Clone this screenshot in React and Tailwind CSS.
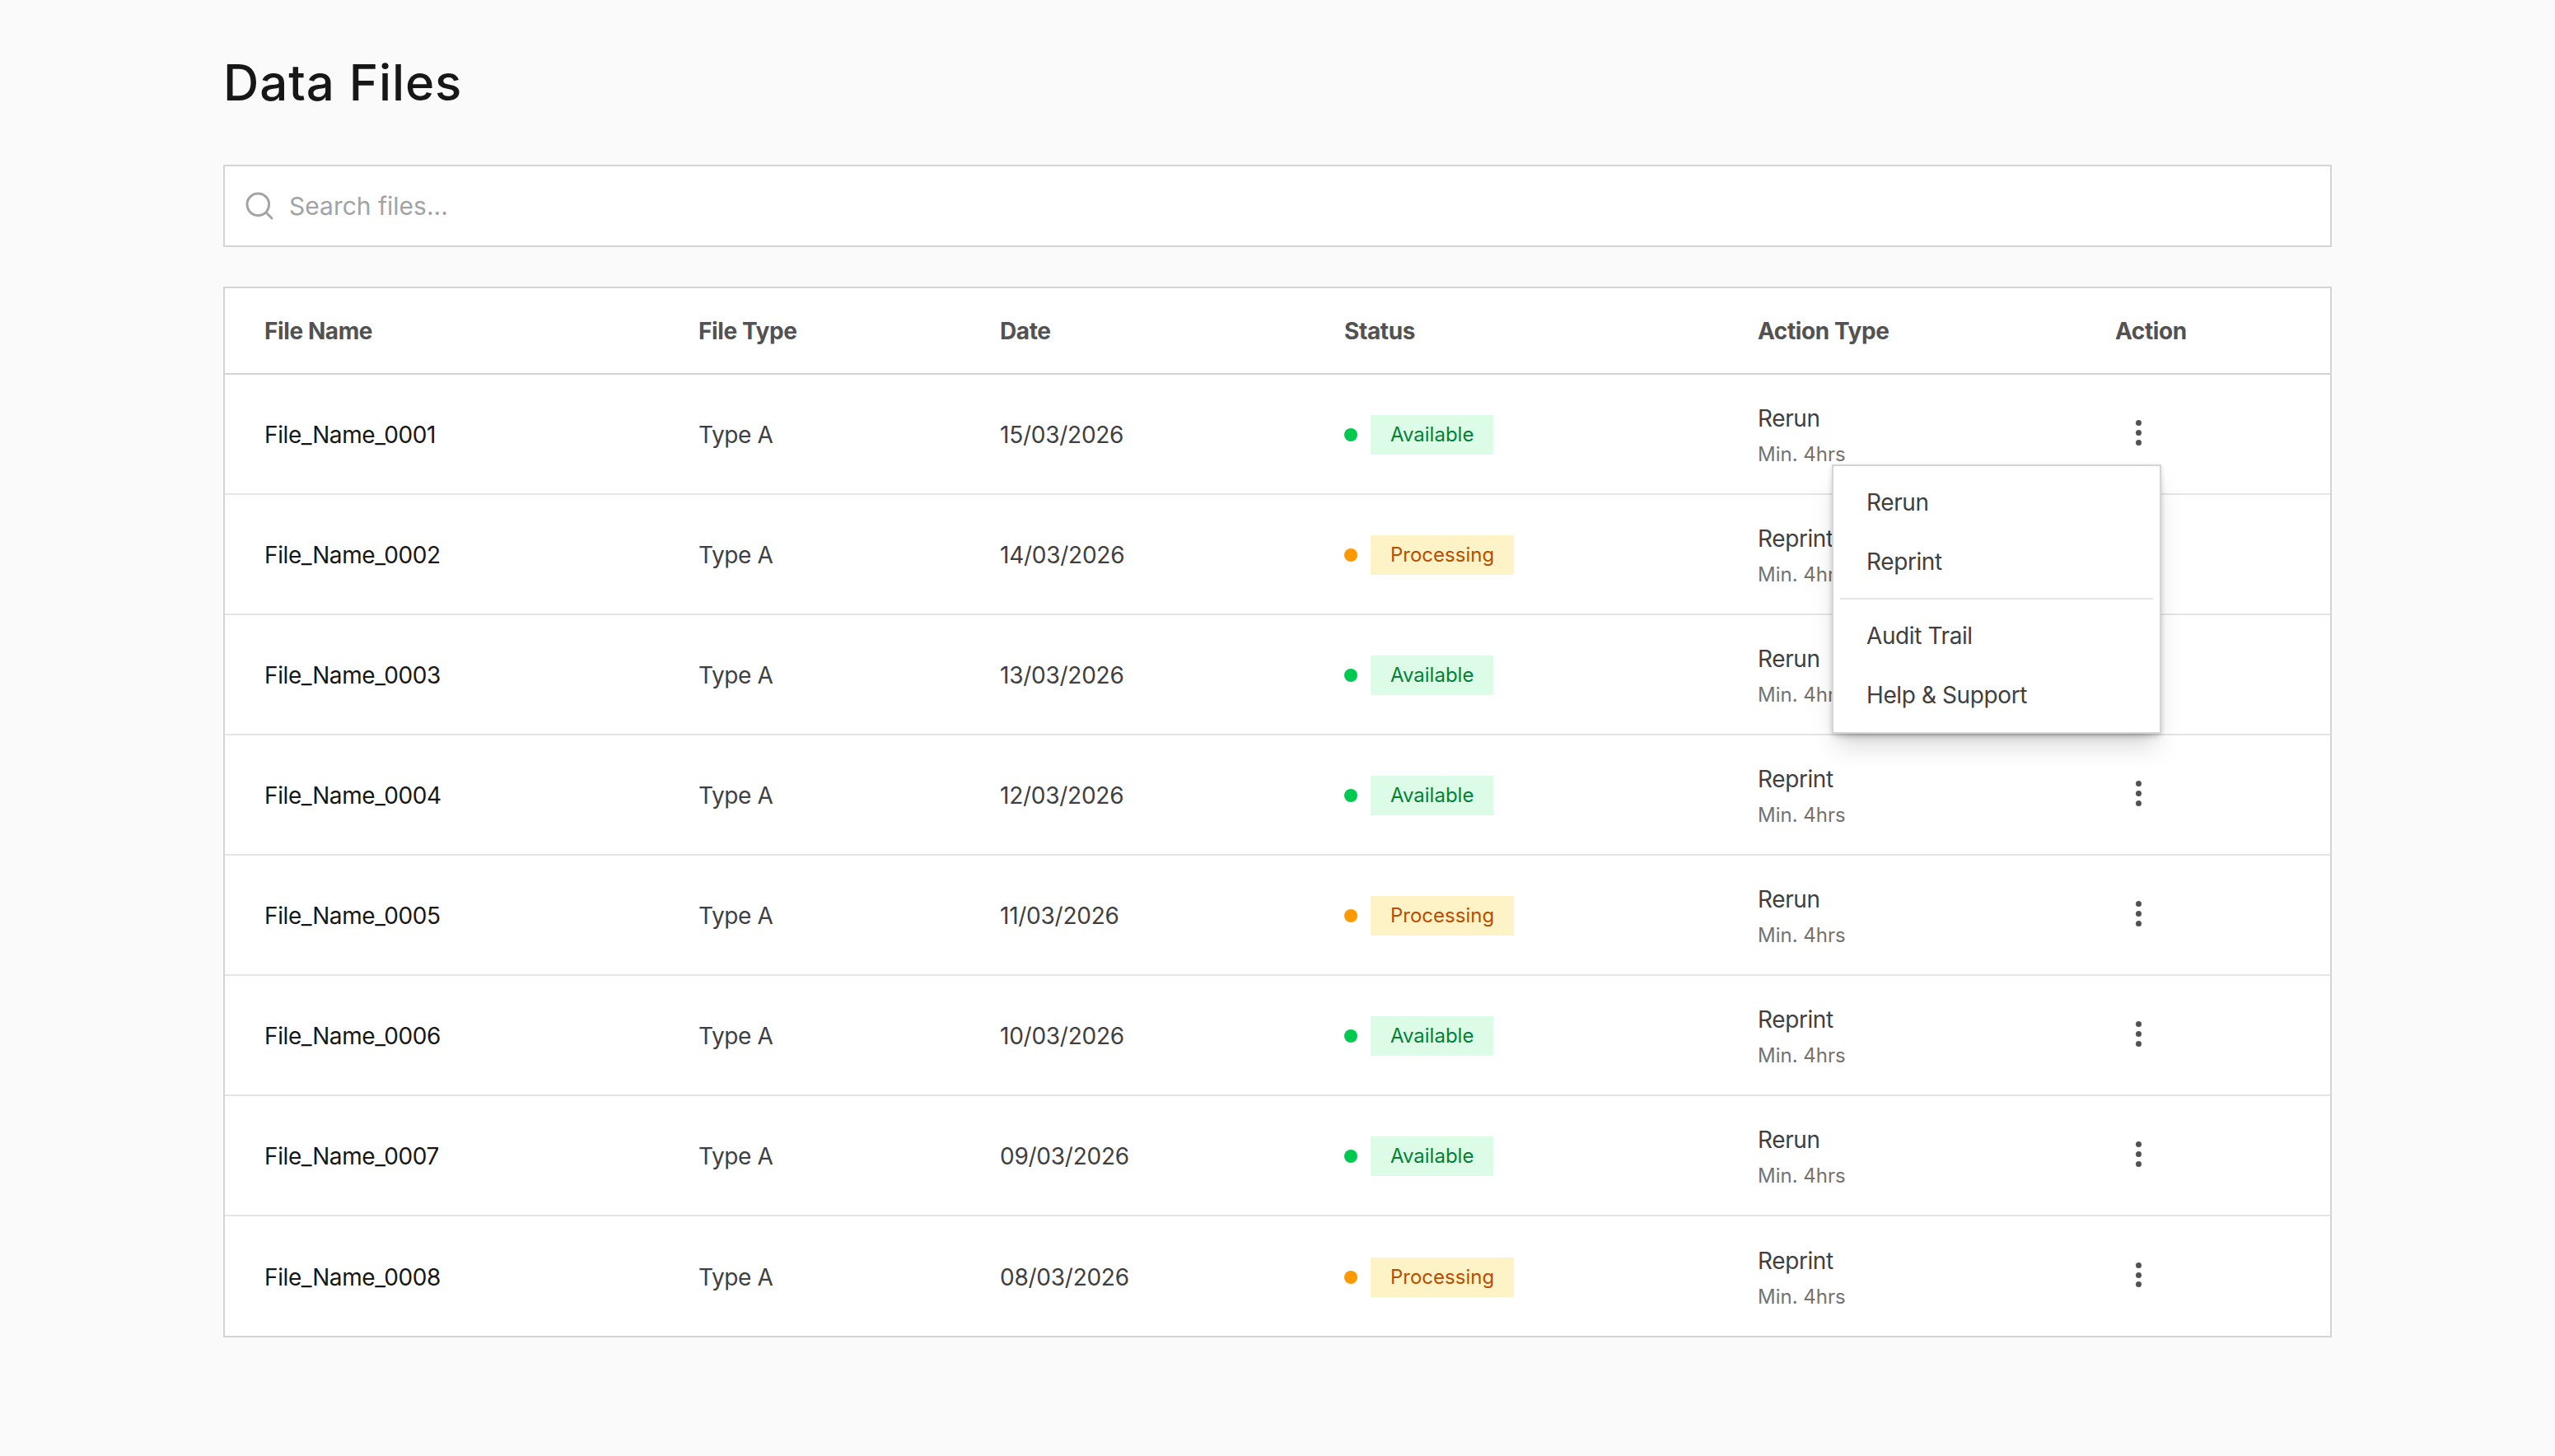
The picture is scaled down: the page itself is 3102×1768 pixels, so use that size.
import React from 'react';
import { Search } from 'lucide-react';

const files = [
    { name: 'File_Name_0001', date: '15/03/2026', status: 'Available', action: 'Rerun' },
    { name: 'File_Name_0002', date: '14/03/2026', status: 'Processing', action: 'Reprint' },
    { name: 'File_Name_0003', date: '13/03/2026', status: 'Available', action: 'Rerun' },
    { name: 'File_Name_0004', date: '12/03/2026', status: 'Available', action: 'Reprint' },
    { name: 'File_Name_0005', date: '11/03/2026', status: 'Processing', action: 'Rerun' },
    { name: 'File_Name_0006', date: '10/03/2026', status: 'Available', action: 'Reprint' },
    { name: 'File_Name_0007', date: '09/03/2026', status: 'Available', action: 'Rerun' },
    { name: 'File_Name_0008', date: '08/03/2026', status: 'Processing', action: 'Reprint' },
];

const rowGrid = 'grid grid-cols-[527px_366px_418px_502px_434px_1fr] pl-12 items-center';

function StatusBadge({ status }) {
    const available = status === 'Available';
    return (
        <div className="flex items-center gap-4 tracking-normal">
            <span className={`w-4 h-4 rounded-full ${available ? 'bg-[#00c950]' : 'bg-[#fe9a00]'}`} />
            <span className={`h-12 px-6 flex items-center text-2xl ${available ? 'bg-[#dcfce7] text-[#008236]' : 'bg-[#fef3c6] text-[#bb4d00]'}`}>{status}</span>
        </div>
    );
}

function Kebab() {
    return (
        <div className="ml-[25px] w-[7px] flex flex-col gap-[4.7px]">
            <span className="w-[7px] h-[7px] rounded-full bg-[#525252]" />
            <span className="w-[7px] h-[7px] rounded-full bg-[#525252]" />
            <span className="w-[7px] h-[7px] rounded-full bg-[#525252]" />
        </div>
    );
}

function RowMenu() {
    return (
        <div className="absolute z-10 left-[-344px] top-[54px] w-[400px] h-[327px] bg-white border-2 border-[#d4d4d4] shadow-[0_20px_30px_-6px_rgba(0,0,0,0.15),0_8px_12px_-8px_rgba(0,0,0,0.25),0_2px_6px_rgba(0,0,0,0.15)] p-2 text-[28px] text-[#404040]">
            <div className="h-[72px] pl-8 flex items-center">Rerun</div>
            <div className="h-[72px] pl-8 flex items-center">Reprint</div>
            <div className="h-[2px] bg-[#e5e5e5] my-[8px]" />
            <div className="h-[72px] pl-8 flex items-center">Audit Trail</div>
            <div className="h-[72px] pl-8 flex items-center">Help &amp; Support</div>
        </div>
    );
}

export default function App() {
    return (
        <div className="min-h-[1768px] bg-[#fafafa] font-['Inter',sans-serif]">
            <div className="w-[2560px] mx-auto">
                <h1 className="pt-[64px] h-[200px] text-[60px] leading-[72px] font-medium tracking-[0.9px] text-[#171717]">Data Files</h1>
                <div className="h-[100px] bg-white border-2 border-[#d4d4d4] flex items-center pl-[22px] gap-4 text-[30px] text-[#a3a3a3]">
                    <Search className="w-10 h-10" strokeWidth={1.75} />
                    <span>Search files...</span>
                </div>
                <div className="mt-12 bg-white border-2 border-[#d4d4d4] tracking-[-0.4px]">
                    <div className={`${rowGrid} h-[105px] border-b-2 border-[#d4d4d4] text-[28px] font-bold text-[#525252]`}>
                        <div>File Name</div>
                        <div>File Type</div>
                        <div>Date</div>
                        <div>Status</div>
                        <div>Action Type</div>
                        <div>Action</div>
                    </div>
                    {files.map((f, i) => (
                        <div key={f.name} className={`${rowGrid} pt-[2px] text-[28px] ${i < files.length - 1 ? 'h-[146px] border-b-2 border-[#e5e5e5]' : 'h-[145px]'}`}>
                            <div className="text-[#171717]">{f.name}</div>
                            <div className="text-[#404040]">Type A</div>
                            <div className="text-[#404040] tracking-[-0.25px]">{f.date}</div>
                            <StatusBadge status={f.status} />
                            <div className="mt-1 flex flex-col gap-[10px] text-[#404040]">
                                <div className="leading-[34px]">{f.action}</div>
                                <div className="text-2xl leading-[34px] tracking-normal text-[#737373]">Min. 4hrs</div>
                            </div>
                            <div className="relative mb-[5px]">
                                <Kebab />
                                {i === 0 && <RowMenu />}
                            </div>
                        </div>
                    ))}
                </div>
            </div>
        </div>
    );
}
